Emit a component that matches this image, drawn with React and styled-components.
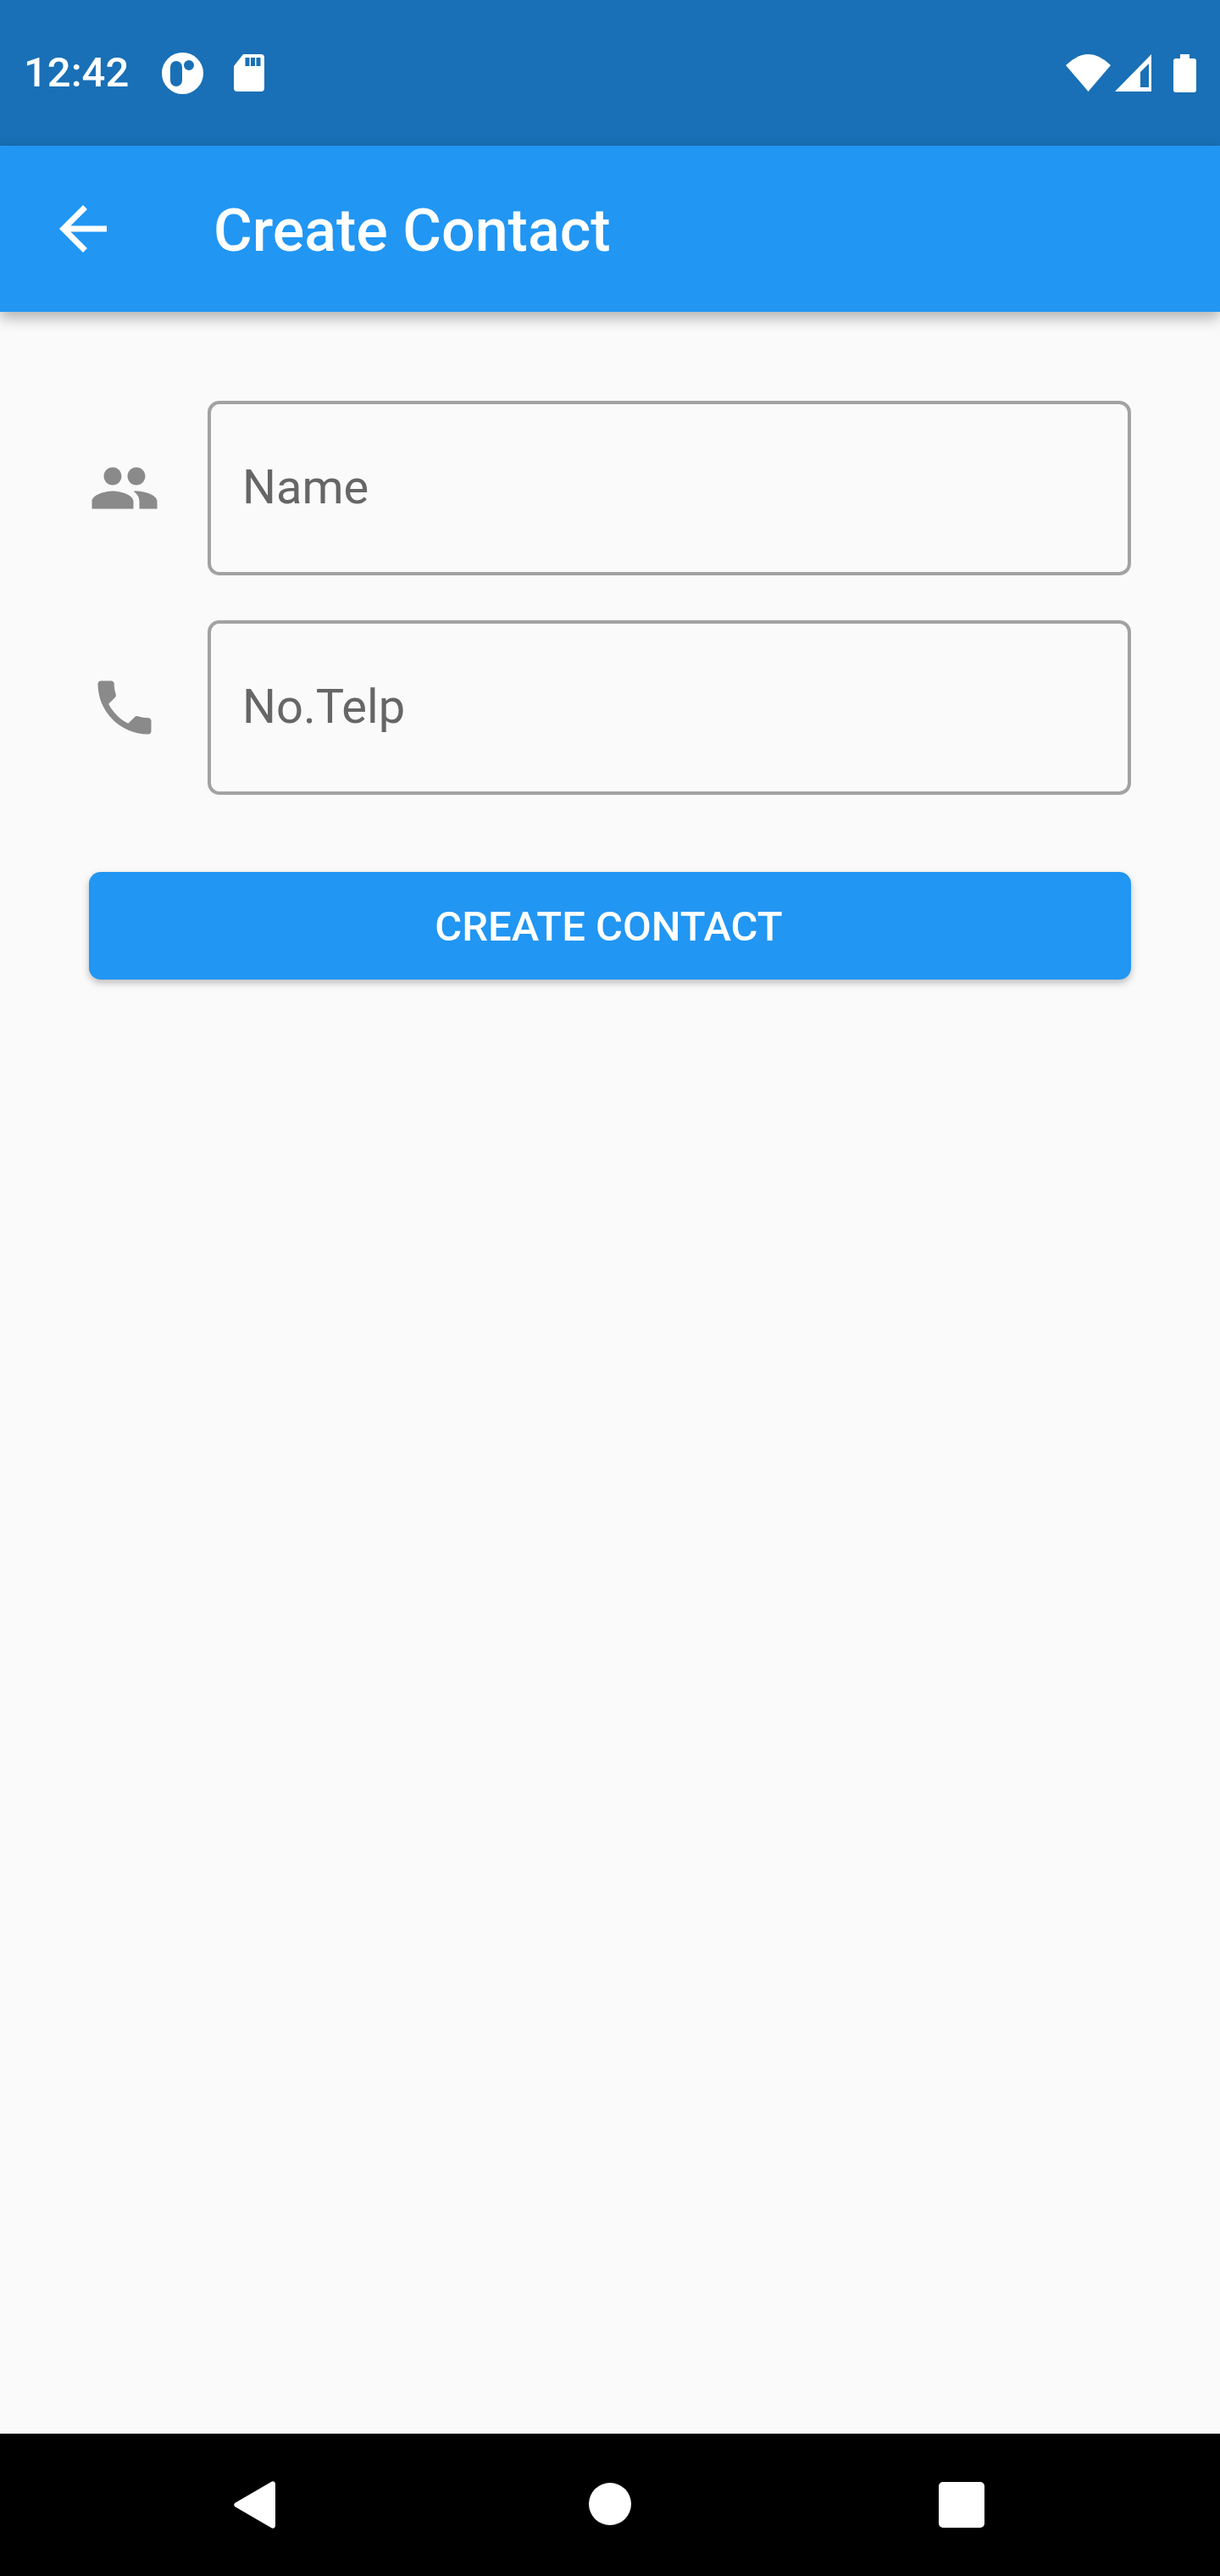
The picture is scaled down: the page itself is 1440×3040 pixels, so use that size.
import React from 'react';
import styled, { createGlobalStyle } from 'styled-components';

const GlobalStyle = createGlobalStyle`
  html, body {
    margin: 0;
    padding: 0;
    background: #fafafa;
  }
  * {
    box-sizing: border-box;
  }
`;

const Screen = styled.div`
  display: flex;
  flex-direction: column;
  width: 1440px;
  height: 3040px;
  overflow: hidden;
  background: #fafafa;
  font-family: Roboto, 'Noto Sans', sans-serif;
`;

/* ---------- Status bar ---------- */
const StatusBar = styled.div`
  display: flex;
  align-items: center;
  justify-content: space-between;
  flex: 0 0 172px;
  padding: 0 28px 0 28px;
  background: #1970b6;
  color: #fff;
`;

const StatusGroup = styled.div`
  display: flex;
  align-items: center;
  gap: ${(props) => props.$gap}px;
`;

const Clock = styled.span`
  font-size: 49px;
  line-height: 56px;
  font-weight: 500;
`;

const Glyph = styled.svg`
  display: block;
  flex: none;
  fill: currentColor;
`;

/* ---------- App bar ---------- */
const AppBar = styled.header`
  position: relative;
  z-index: 2;
  display: flex;
  align-items: center;
  flex: 0 0 196px;
  gap: 112px;
  padding-left: 56px;
  background: #2196f3;
  color: #fff;
  box-shadow: 0 7px 16px rgba(0, 0, 0, 0.3);
`;

const Title = styled.h1`
  margin: 4px 0 0;
  font-size: 70px;
  line-height: 84px;
  font-weight: 500;
`;

/* ---------- Form ---------- */
const Form = styled.main`
  display: flex;
  flex-direction: column;
  flex: 1;
  padding: 105px 105px 0;
`;

const FieldRow = styled.div`
  display: flex;
  align-items: center;
  gap: 56px;
  margin-bottom: 53px;
`;

const FieldIcon = styled(Glyph)`
  color: #8a8a8a;
`;

const Field = styled.div`
  display: flex;
  align-items: center;
  flex: 1;
  height: 206px;
  padding: 0 37px 2px;
  border: 4px solid #a2a2a2;
  border-radius: 14px;
`;

const Hint = styled.span`
  font-size: 56px;
  line-height: 66px;
  color: #666;
`;

const SubmitButton = styled.button`
  height: 127px;
  margin-top: 38px;
  padding: 2px 3px 0 0;
  border: 0;
  border-radius: 14px;
  background: #2196f3;
  color: #fff;
  font-family: inherit;
  font-size: 49px;
  font-weight: 500;
  box-shadow: 0 4px 8px rgba(0, 0, 0, 0.25);
`;

/* ---------- Navigation bar ---------- */
const NavBar = styled.nav`
  display: flex;
  align-items: center;
  justify-content: center;
  flex: 0 0 168px;
  gap: 333px;
  background: #000;
  color: #fff;
`;

const ICON_PEOPLE =
  'M16 11c1.66 0 2.99-1.34 2.99-3S17.66 5 16 5c-1.66 0-3 1.34-3 3s1.34 3 3 3zm-8 0c1.66 0 2.99-1.34 2.99-3S9.66 5 8 5C6.34 5 5 6.34 5 8s1.34 3 3 3zm0 2c-2.33 0-7 1.17-7 3.5V19h14v-2.5c0-2.33-4.67-3.5-7-3.5zm8 0c-.29 0-.62.02-.97.05 1.16.84 1.97 1.97 1.97 3.45V19h6v-2.5c0-2.33-4.67-3.5-7-3.5z';
const ICON_PHONE =
  'M6.62 10.79c1.44 2.83 3.76 5.14 6.59 6.59l2.2-2.2c.27-.27.67-.36 1.02-.24 1.12.37 2.33.57 3.57.57.55 0 1 .45 1 1V20c0 .55-.45 1-1 1-9.39 0-17-7.61-17-17 0-.55.45-1 1-1h3.5c.55 0 1 .45 1 1 0 1.25.2 2.45.57 3.57.11.35.03.74-.25 1.02l-2.2 2.2z';
const ICON_BACK = 'M20 11H7.83l5.59-5.59L12 4l-8 8 8 8 1.41-1.41L7.83 13H20v-2z';

const fields = [
  { label: 'Name', icon: ICON_PEOPLE },
  { label: 'No.Telp', icon: ICON_PHONE },
];

const App = () => (
  <Screen>
    <GlobalStyle />
    <StatusBar>
      <StatusGroup $gap={39}>
        <Clock>12:42</Clock>
        <StatusGroup $gap={36}>
          <Glyph width="49" height="49" viewBox="0 0 49 49">
            <path
              fillRule="evenodd"
              d="M24.5 0a24.5 24.5 0 1 0 0 49a24.5 24.5 0 1 0 0-49zM17 10a7 7 0 0 1 7 7v16a7 7 0 0 1-14 0V17a7 7 0 0 1 7-7zM32 9a6 6 0 1 1 0 12a6 6 0 1 1 0-12z"
            />
          </Glyph>
          <Glyph width="36" height="44" viewBox="0 0 36 44">
            <path
              fillRule="evenodd"
              d="M11 0H32a4 4 0 0 1 4 4V40a4 4 0 0 1-4 4H4a4 4 0 0 1-4-4V14zM13.5 4v10h5V4zM20 4v10h5V4zM26.5 4v10h5V4z"
            />
          </Glyph>
        </StatusGroup>
      </StatusGroup>
      <StatusGroup $gap={26}>
        <StatusGroup $gap={5}>
          <Glyph width="53" height="44" viewBox="0 0 53 44">
            <path d="M0 13Q26.5-13 53 13L26.5 44Z" />
          </Glyph>
          <Glyph width="43" height="44" viewBox="0 0 43 44">
            <path fillRule="evenodd" d="M43 0V44H0ZM30 21V39H40V11Z" />
          </Glyph>
        </StatusGroup>
        <Glyph width="27" height="45" viewBox="0 0 27 45">
          <path d="M8 0H19V5H24a3 3 0 0 1 3 3V42a3 3 0 0 1-3 3H3a3 3 0 0 1-3-3V8a3 3 0 0 1 3-3H8Z" />
        </Glyph>
      </StatusGroup>
    </StatusBar>

    <AppBar>
      <Glyph width="84" height="84" viewBox="0 0 24 24">
        <path d={ICON_BACK} />
      </Glyph>
      <Title>Create Contact</Title>
    </AppBar>

    <Form>
      {fields.map((field) => (
        <FieldRow key={field.label}>
          <FieldIcon width="84" height="84" viewBox="0 0 24 24">
            <path d={field.icon} />
          </FieldIcon>
          <Field>
            <Hint>{field.label}</Hint>
          </Field>
        </FieldRow>
      ))}
      <SubmitButton type="button">CREATE CONTACT</SubmitButton>
    </Form>

    <NavBar>
      <Glyph width="84" height="84" viewBox="0 0 84 84">
        <path d="M64 17V67a3 3 0 0 1-5 2L16 44a3 3 0 0 1 0-4L59 15a3 3 0 0 1 5 2Z" />
      </Glyph>
      <Glyph width="84" height="84" viewBox="0 0 84 84">
        <circle cx="42" cy="41" r="25" />
      </Glyph>
      <Glyph width="84" height="84" viewBox="0 0 84 84">
        <rect x="13" y="15" width="54" height="54" rx="5" />
      </Glyph>
    </NavBar>
  </Screen>
);

export default App;
